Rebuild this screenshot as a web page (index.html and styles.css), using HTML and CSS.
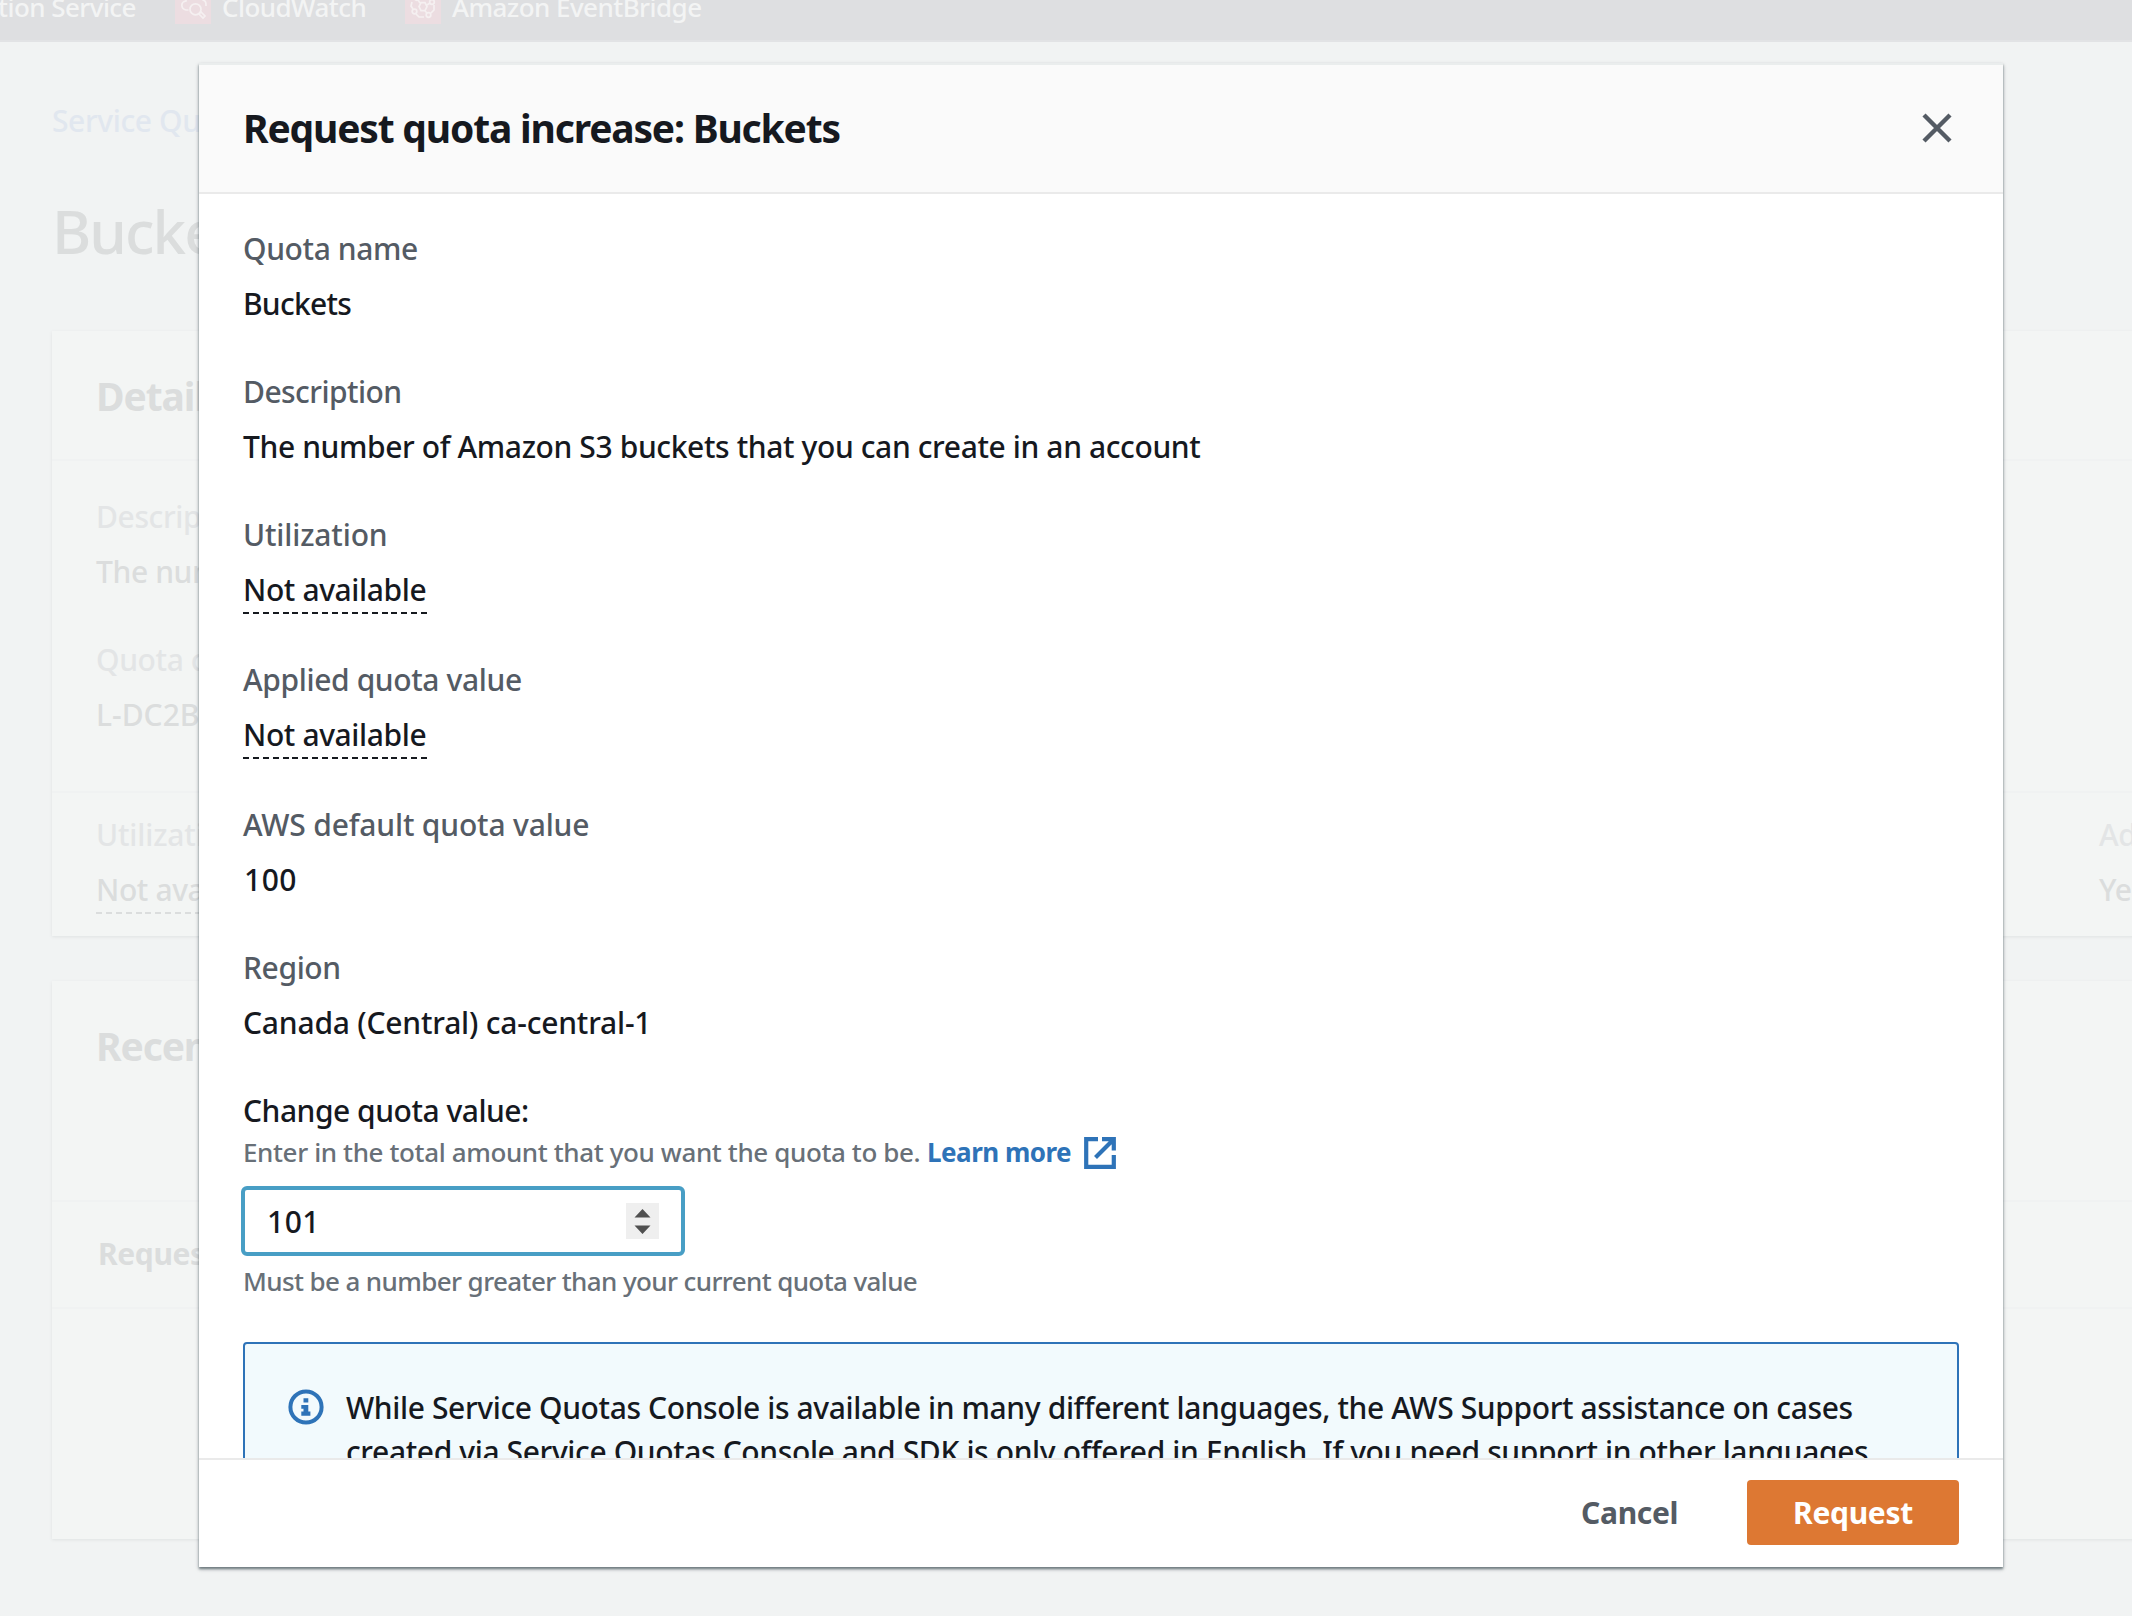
FILE: index.html
```html
<!DOCTYPE html>
<html lang="en">
<head>
<meta charset="utf-8">
<title>Service Quotas</title>
<link rel="stylesheet" href="styles.css">
</head>
<body>
<div class="page">
  <nav class="favorites">
    <span class="fav fav-first">tion Service</span>
    <span class="fav fav-cw">
      <svg class="fav-icon" viewBox="0 0 36 36"><rect width="36" height="36" fill="#ecdde1"/><g fill="none" stroke="#f5f0f1" stroke-width="1.7"><path d="M13.5 22H11c-5-1-6-8 0-9 0-7 7-9 11-6 3-1 6 1 6 5 3 1 3 3 3 6"/><circle cx="20.5" cy="21.3" r="5.5"/><path d="M24 26l2-2 4 4-2 2z"/></g></svg>
      CloudWatch</span>
    <span class="fav fav-eb">
      <svg class="fav-icon" viewBox="0 0 36 36"><rect width="36" height="36" fill="#ecdde1"/><g fill="none" stroke="#f5f0f1" stroke-width="1.7"><path d="M14 18.6l2-4h4l2 4-2 4h-4z"/><circle cx="9.5" cy="23.5" r="2.3"/><circle cx="23.5" cy="27" r="2.3"/><circle cx="27" cy="14" r="2.3"/><circle cx="12" cy="10" r="2.3"/><path d="M7 14l-1 4 2 3M11 26l3 3h5M20 23l2 2M22 17l3-2M15 15l-2-3M29 17v5l-3 3"/></g></svg>
      Amazon EventBridge</span>
  </nav>
  <div class="crumb">Service Quotas</div>
  <h1 class="page-title">Buckets</h1>
  <section class="card card-details">
    <h2 class="card-title">Details</h2>
    <div class="card-main">
      <div class="bg-label">Description</div>
      <div class="bg-value">The number</div>
      <div class="bg-label second">Quota code</div>
      <div class="bg-value code">L-DC2B2D3D</div>
    </div>
    <div class="card-columns">
      <div class="col-first"><div class="bg-label util">Utilization</div><div class="bg-value dashed">Not available</div></div>
      <div><div class="bg-label">Adjustability</div><div class="bg-value">Yes</div></div>
    </div>
  </section>
  <section class="card card-recent">
    <h2 class="card-title">Recent quota</h2>
    <div class="table-head">Request date</div>
  </section>
</div>

<div class="modal" role="dialog">
  <header class="modal-header">
    <h2 class="modal-title">Request quota increase: Buckets</h2>
    <svg class="close" viewBox="0 0 32 32"><path d="M3 3L29 29M29 3L3 29" stroke="#545b64" stroke-width="4.4"/></svg>
  </header>
  <div class="modal-body">
    <div class="item"><div class="label">Quota name</div><div class="value name">Buckets</div></div>
    <div class="item"><div class="label desc">Description</div><div class="value">The number of Amazon S3 buckets that you can create in an account</div></div>
    <div class="item"><div class="label util">Utilization</div><div class="value dashed">Not available</div></div>
    <div class="item"><div class="label">Applied quota value</div><div class="value dashed">Not available</div></div>
    <div class="item"><div class="label default">AWS default quota value</div><div class="value digits">100</div></div>
    <div class="item"><div class="label">Region</div><div class="value region">Canada (Central) ca-central-1</div></div>
    <div class="field">
      <div class="value field-label">Change quota value:</div>
      <div class="hint"><span class="hint-text">Enter in the total amount that you want the quota to be.</span><a class="link">Learn more</a>
        <svg class="external" viewBox="0 0 32 32"><path d="M14 2.2H2.2V29.8H29.8V18M18 2.2H29.8V13.5M29 3L11.5 20.5" fill="none" stroke="#2e73b8" stroke-width="4.2"/></svg>
      </div>
      <div class="input"><span class="digits number">101</span>
        <svg class="spinner" viewBox="0 0 33 36"><rect width="33" height="36" fill="#efefef"/><path d="M8.5 14.5L16.5 6L24.5 14.5ZM8.5 22.5H24.5L16.5 31Z" fill="#505050"/></svg>
      </div>
      <div class="constraint">Must be a number greater than your current quota value</div>
    </div>
    <div class="alert">
      <svg class="info" viewBox="0 0 36 36"><circle cx="18" cy="18" r="15.6" fill="none" stroke="#2e73b8" stroke-width="4"/><path d="M15.5 9.3H20.3V13.6H15.5ZM13.3 16H20.3V22.6H22.4V26.8H13.3V22.6H15.5V19.8H13.3Z" fill="#2e73b8"/></svg>
      <div class="alert-text"><div class="line-one">While Service Quotas Console is available in many different languages, the AWS Support assistance on cases</div><div class="line-two">created via Service Quotas Console and SDK is only offered in English. If you need support in other languages</div></div>
    </div>
  </div>
  <footer class="modal-footer">
    <span class="cancel">Cancel</span>
    <span class="request">Request</span>
  </footer>
</div>
</body>
</html>
```

FILE: styles.css
```css
* { box-sizing: border-box; }
body {
  margin: 0;
  width: 2132px;
  height: 1616px;
  overflow: hidden;
  background: #f1f3f3;
  color: #16191f;
  font: 500 30px/44px "Noto Sans", "Open Sans", sans-serif;
  letter-spacing: -0.38px;
  white-space: nowrap;
}
h1, h2 { margin: 0; }
svg { display: block; flex: none; }

.page { height: 1616px; overflow: hidden; color: #dbdddd; }
.favorites {
  display: flex;
  height: 42px;
  background: #dedfe1;
  border-bottom: 2px solid #e2e3e5;
  color: #f3f4f4;
  font-size: 26px;
  line-height: 36px;
  letter-spacing: -0.55px;
}
.fav { display: flex; gap: 11px; height: 36px; margin-top: -11px; }
.fav-first { width: 177px; margin-left: -2px; }
.fav-cw { width: 230px; }
.fav-icon { width: 36px; height: 36px; margin-top: -1px; }
.crumb { margin: 57px 0 0 52px; color: #e1e7ef; }
.page-title { margin: 48px 0 0 52px; font-size: 60px; font-weight: 500; line-height: 80px; letter-spacing: -1.9px; }
.card {
  margin-left: 52px;
  width: 2200px;
  background: #f3f5f4;
  box-shadow: 0 1px 3px #dfe2e2;
}
.card-details { height: 605px; margin-top: 60px; }
.card-recent { height: 558px; margin-top: 45px; }
.card-title { padding: 37px 0 0 44px; height: 130px; border-bottom: 2px solid #f0f2f2; font-size: 39px; line-height: 56px; letter-spacing: -1.1px; }
.card-main { height: 332px; padding: 34px 0 0 44px; border-bottom: 2px solid #f0f2f2; }
.bg-label { color: #e3e5e6; }
.bg-value { margin-top: 11px; }
.second { margin-top: 44px; }
.code { letter-spacing: 0; }
.card-columns { display: flex; padding: 20px 0 0 44px; }
.col-first { width: 2003px; flex: none; }
.card-recent .card-title { height: 221px; }
.table-head { height: 107px; padding: 30px 0 0 46px; border-bottom: 2px solid #f0f2f2; font-weight: 700; }

.dashed {
  width: 184px;
  height: 46px;
  background: repeating-linear-gradient(90deg, currentColor 0 6px, transparent 6px 9.9px) 0 100% / 100% 2px no-repeat;
}

.modal {
  position: absolute;
  left: 199px;
  top: 63px;
  width: 1804px;
  height: 1504px;
  display: flex;
  flex-direction: column;
  background: #fff;
  box-shadow: 0 2px 2px rgba(70, 85, 90, .6), 0 2px 4px rgba(0, 28, 36, .3);
}
.modal-header {
  display: flex;
  justify-content: space-between;
  align-items: center;
  height: 131px;
  padding: 0 50px 2px 44px;
  background: #fafafa;
  border-top: 2px solid #eaeded;
  border-bottom: 2px solid #eaeaea;
}
.modal-title { font-size: 39px; line-height: 54px; letter-spacing: -1.18px; }
.close { width: 32px; height: 32px; }
.modal-body { height: 1264px; padding: 33px 44px 0; overflow: hidden; }
.item { margin-bottom: 44px; }
.label { color: #545b64; }
.value { color: #16191f; }
.label + .value { margin-top: 11px; }
.name { letter-spacing: -0.75px; }
.desc { letter-spacing: -0.55px; }
.util { letter-spacing: -0.15px; }
.default { letter-spacing: -0.17px; }
.region { letter-spacing: -0.2px; }
.digits { padding-left: 1px; letter-spacing: 0.5px; }
.field-label { letter-spacing: -0.48px; }
.hint { display: flex; height: 36px; margin-top: 1px; color: #687078; font-size: 26px; line-height: 36px; letter-spacing: -0.38px; }
.hint-text { width: 684px; }
.link { width: 157px; color: #2e73b8; font-weight: 700; letter-spacing: -0.5px; }
.external { width: 32px; height: 32px; margin-top: 3px; }
.input {
  display: flex;
  justify-content: space-between;
  align-items: center;
  width: 444px;
  height: 70px;
  margin: 16px 0 0 -2px;
  padding: 0 22px 0 21px;
  border: 4px solid #489ec5;
  border-radius: 6px;
}
.number { padding-top: 1px; }
.spinner { width: 33px; height: 36px; }
.constraint { margin-top: 7px; color: #687078; font-size: 26px; line-height: 36px; letter-spacing: -0.61px; }
.alert {
  display: flex;
  height: 240px;
  margin-top: 43px;
  padding: 42px 44px;
  border: 2px solid #2e73b8;
  border-radius: 4px;
  background: #f2fafd;
}
.info { width: 36px; height: 36px; margin: 3px 22px 0 -1px; }
.modal-footer {
  display: flex;
  justify-content: flex-end;
  align-items: center;
  height: 109px;
  padding: 0 44px 2px;
  border-top: 2px solid #eaeaea;
  background: #fff;
  font-weight: 700;
  letter-spacing: -0.3px;
}
.cancel { width: 166px; color: #545b64; }
.request { width: 212px; height: 65px; border-radius: 4px; background: #dd7833; color: #fff; text-align: center; line-height: 65px; }
```
